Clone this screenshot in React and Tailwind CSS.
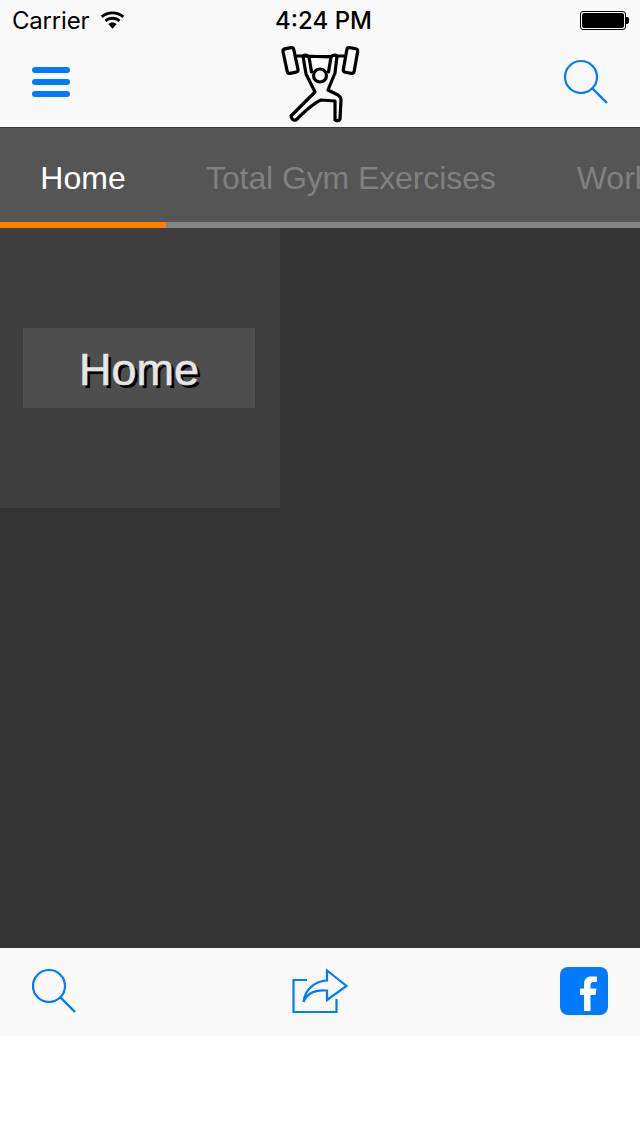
import React from "react";

const BLUE = "#007aff";

function SearchIcon() {
  return (
    <svg width="48" height="48" viewBox="0 0 48 48" fill="none" stroke={BLUE} strokeWidth="2.2">
      <circle cx="18" cy="18" r="16" />
      <path d="M29 29 L44 44" strokeWidth="2.4" />
    </svg>
  );
}

function Wifi() {
  return (
    <svg width="25" height="18" viewBox="0 0 26 18" fill="#000">
      <path d="M13 18 L8.6 13.2 C11 10.9 15 10.9 17.4 13.2 Z" />
      <path d="M6.7 11.1 L4.7 8.9 C9.2 4.6 16.8 4.6 21.3 8.9 L19.3 11.1 C15.8 7.8 10.2 7.8 6.7 11.1 Z" />
      <path d="M2.8 6.9 L0.7 4.7 C7.5 -1.5 18.5 -1.5 25.3 4.7 L23.2 6.9 C17.5 1.8 8.5 1.8 2.8 6.9 Z" />
    </svg>
  );
}

function Battery() {
  return (
    <div className="flex items-center">
      <div className="w-[46px] h-[19px] rounded-[3px] border border-black p-[1px] bg-white">
        <div className="w-full h-full rounded-[2px] bg-black" />
      </div>
      <div className="w-[3px] h-[7px] rounded-r-[2px] bg-black" />
    </div>
  );
}

function Lifter() {
  return (
    <svg width="84" height="84" viewBox="278 42 84 84" fill="none" stroke="#000" strokeWidth="3.2" strokeLinejoin="round" strokeLinecap="round">
      <rect x="285" y="48" width="11" height="25" rx="2.5" transform="rotate(-12 290.5 60.5)" />
      <rect x="345" y="48" width="11" height="25" rx="2.5" transform="rotate(10 350.5 60.5)" />
      <path d="M297 56 H303 M309 56.5 H331 M337 56 H344" />
      <path d="M303 56 Q306 54 309 57 L311.5 72 M331 57 Q334 54 337 56 L335 73 L328 90 L338 95 Q341 97 341 100 L340 119 Q338 122 335 120 L335 101 L321 100 C314 103 304 112 296 120 Q292 121 291 116 L315 92 L306 74 L303 56 Z M331 57 L328.5 72" />
      <circle cx="320" cy="75.5" r="6.5" />
    </svg>
  );
}

function ShareIcon() {
  return (
    <svg width="58" height="46" viewBox="291 968 58 46" fill="none" stroke={BLUE} strokeWidth="2.2">
      <path d="M307 980 H293.5 V1012 H336.5 V999" />
      <path d="M327 970.5 L346.5 986 L327 1000 V990.5 C315 989.5 307 993 303.5 1002 C305 989 315 981 327 980.5 Z" strokeLinejoin="miter" />
    </svg>
  );
}

function FacebookIcon() {
  return (
    <svg width="48" height="48" viewBox="0 0 48 48">
      <rect width="48" height="48" rx="8" fill={BLUE} />
      <path
        fill="#fff"
        d="M24 44 V28 H20 V21.5 H24 V17 C24 12 27 9.5 31 9.5 H37 V15 H33.5 C31.5 15 30.5 16 30.5 18 V21.5 H36.5 L35.5 28 H30.5 V44 Z"
      />
    </svg>
  );
}

export default function App() {
  return (
    <div className="w-[640px] h-[1136px] overflow-hidden bg-white flex flex-col font-['Liberation_Sans',sans-serif]">
      {/* top bars */}
      <header className="h-[128px] bg-[#f9f9f9] border-b border-[#3a3a3a] flex flex-col">
        <div className="h-[40px] pl-[12px] pr-[13px] flex items-center justify-between relative text-black">
          <div className="flex items-center gap-[11px]">
            <span className="text-[24px] leading-none font-['Inter',sans-serif] tracking-[-0.2px] pt-[2px]">Carrier</span>
            <Wifi />
          </div>
          <span className="absolute left-0 right-0 pl-[7px] text-center text-[24px] leading-none font-medium font-['Inter',sans-serif] pt-[2px]">4:24 PM</span>
          <div className="-mr-[2px]">
            <Battery />
          </div>
        </div>
        <div className="flex-1 flex items-center justify-between pl-[32px] pr-[29px]">
          <div className="flex flex-col gap-[6px] w-[38px] -mt-[3px]">
            <div className="h-[6px] rounded-full bg-[#007aff]" />
            <div className="h-[6px] rounded-full bg-[#007aff]" />
            <div className="h-[6px] rounded-full bg-[#007aff]" />
          </div>
          <div className="ml-[7px] mt-[1px]">
            <Lifter />
          </div>
          <div className="-mt-[1px]">
            <SearchIcon />
          </div>
        </div>
      </header>

      {/* tab strip */}
      <nav className="h-[100px] bg-[#555555] flex flex-col">
        <div className="flex-1 flex whitespace-nowrap text-[32px] leading-none">
          <div className="w-[166px] shrink-0 flex items-center justify-center pt-[5px] text-white">Home</div>
          <div className="shrink-0 px-[40px] flex items-center pt-[5px] text-[#808080] tracking-[-0.1px]">Total Gym Exercises</div>
          <div className="shrink-0 px-[41px] flex items-center pt-[5px] text-[#808080]">Work</div>
        </div>
        <div className="h-[6px] bg-[#858585]">
          <div className="w-[166px] h-full bg-[#ff8000]" />
        </div>
      </nav>

      {/* content */}
      <main className="h-[720px] bg-[#333333]">
        <div className="w-[280px] h-[280px] bg-[#3e3e3e] flex items-center pl-[23px] pr-[25px]">
          <div className="w-full h-[80px] pt-[2px] bg-[#4e4e4e] flex items-center justify-center text-[45px] leading-none text-[#e6e6e6] [-webkit-text-stroke:0.6px_#e6e6e6] [text-shadow:3px_3px_0_#000]">
            Home
          </div>
        </div>
      </main>

      {/* bottom bar */}
      <footer className="h-[88px] bg-[#f9f9f9] pb-[2px] flex items-center justify-between pl-[31px] pr-[32px]">
        <div className="mt-[2px]">
          <SearchIcon />
        </div>
        <div className="ml-[1px]">
          <ShareIcon />
        </div>
        <FacebookIcon />
      </footer>
    </div>
  );
}
